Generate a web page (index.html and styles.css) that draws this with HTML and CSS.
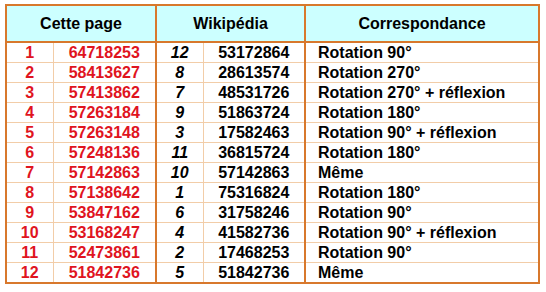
FILE: index.html
```html
<!DOCTYPE html>
<html lang="fr">
<head>
<meta charset="utf-8">
<title>Correspondance</title>
<link rel="stylesheet" href="styles.css">
</head>
<body>
<table class="grid">
  <colgroup>
    <col class="c1"><col class="c2"><col class="c3"><col class="c4"><col class="c5">
  </colgroup>
  <thead>
    <tr>
      <th colspan="2" class="grp">Cette page</th>
      <th colspan="2" class="grp">Wikipédia</th>
      <th>Correspondance</th>
    </tr>
  </thead>
  <tbody>
    <tr><td class="red">1</td><td class="red sep">64718253</td><td class="it">12</td><td class="sep">53172864</td><td class="txt">Rotation 90°</td></tr>
    <tr><td class="red">2</td><td class="red sep">58413627</td><td class="it">8</td><td class="sep">28613574</td><td class="txt">Rotation 270°</td></tr>
    <tr><td class="red">3</td><td class="red sep">57413862</td><td class="it">7</td><td class="sep">48531726</td><td class="txt">Rotation 270° + réflexion</td></tr>
    <tr><td class="red">4</td><td class="red sep">57263184</td><td class="it">9</td><td class="sep">51863724</td><td class="txt">Rotation 180°</td></tr>
    <tr><td class="red">5</td><td class="red sep">57263148</td><td class="it">3</td><td class="sep">17582463</td><td class="txt">Rotation 90° + réflexion</td></tr>
    <tr><td class="red">6</td><td class="red sep">57248136</td><td class="it">11</td><td class="sep">36815724</td><td class="txt">Rotation 180°</td></tr>
    <tr><td class="red">7</td><td class="red sep">57142863</td><td class="it">10</td><td class="sep">57142863</td><td class="txt">Même</td></tr>
    <tr><td class="red">8</td><td class="red sep">57138642</td><td class="it">1</td><td class="sep">75316824</td><td class="txt">Rotation 180°</td></tr>
    <tr><td class="red">9</td><td class="red sep">53847162</td><td class="it">6</td><td class="sep">31758246</td><td class="txt">Rotation 90°</td></tr>
    <tr><td class="red">10</td><td class="red sep">53168247</td><td class="it">4</td><td class="sep">41582736</td><td class="txt">Rotation 90° + réflexion</td></tr>
    <tr><td class="red">11</td><td class="red sep">52473861</td><td class="it">2</td><td class="sep">17468253</td><td class="txt">Rotation 90°</td></tr>
    <tr><td class="red">12</td><td class="red sep">51842736</td><td class="it">5</td><td class="sep">51842736</td><td class="txt">Même</td></tr>
  </tbody>
</table>
</body>
</html>
```

FILE: styles.css
```css
html, body {
  margin: 0;
  padding: 0;
  background: #ffffff;
}

.grid {
  border-collapse: collapse;
  table-layout: fixed;
  margin: 4px 0 0 5px;
  width: 535px;
  border: 2px solid #D8782C;
  font-family: "Liberation Sans", Arial, sans-serif;
  font-weight: bold;
  font-size: 16px;
  color: #000000;
}

.c1 { width: 47px; }
.c2 { width: 103px; }
.c3 { width: 47px; }
.c4 { width: 102px; }
.c5 { width: auto; }

.grid th {
  height: 35px;
  padding: 0;
  background: #CCFFFF;
  border: 2px solid #D8782C;
  text-align: center;
  font-weight: bold;
  vertical-align: middle;
}

.grid td {
  height: 19px;
  padding: 0;
  line-height: 18px;
  border: 1px solid #F2CDA8;
  text-align: center;
  vertical-align: middle;
}

.grid td.sep {
  border-right: 2px solid #D8782C;
}

.grid td.red {
  color: #E0141E;
}

.grid td.it {
  font-style: italic;
}

.grid td.txt {
  text-align: left;
  padding-left: 12px;
}
```
